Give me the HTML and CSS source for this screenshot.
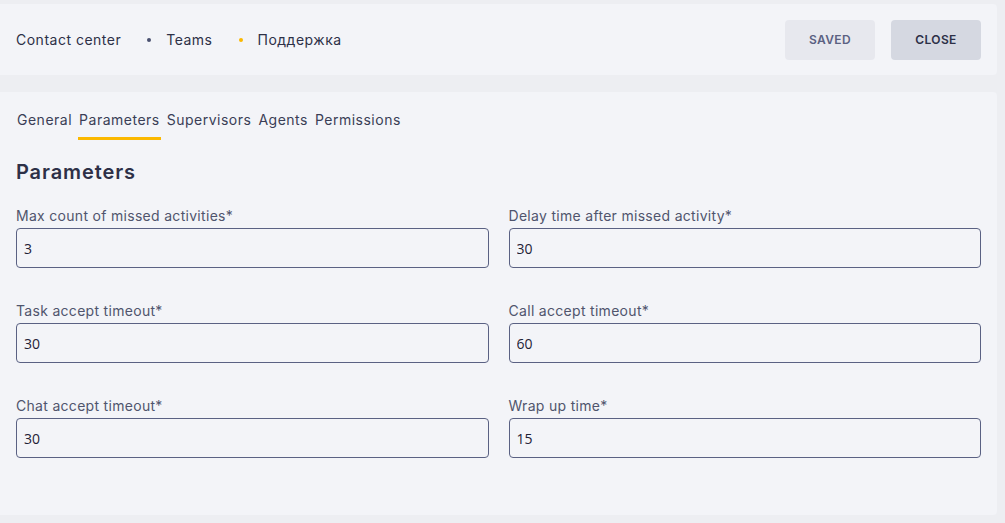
FILE: index.html
```html
<!DOCTYPE html>
<html>
<head>
	<title>Team parameters</title>
	<link rel="stylesheet" href="styles.css">
</head>
<body>

	<div id="boxHeader">
		<div id="boxCrumbs">
			<span class="lblCrumb">Contact center</span>
			<span class="dotCrumb"></span>
			<span class="lblCrumb">Teams</span>
			<span class="dotCrumb dotActive"></span>
			<span class="lblCrumb">Поддержка</span>
		</div>
		<div id="boxActions">
			<button class="btnAction btnSaved">SAVED</button>
			<button class="btnAction btnClose">CLOSE</button>
		</div>
	</div>

	<div id="boxContent">
		<div id="boxTabs">
			<span class="tab">General</span>
			<span class="tab tabActive">Parameters</span>
			<span class="tab">Supervisors</span>
			<span class="tab">Agents</span>
			<span class="tab">Permissions</span>
		</div>

		<h2 id="lblTitle">Parameters</h2>

		<div id="boxFields">
			<div class="field">
				<label class="lblField">Max count of missed activities*</label>
				<input class="inputField" type="text" value="3">
			</div>
			<div class="field">
				<label class="lblField">Delay time after missed activity*</label>
				<input class="inputField" type="text" value="30">
			</div>
			<div class="field">
				<label class="lblField">Task accept timeout*</label>
				<input class="inputField" type="text" value="30">
			</div>
			<div class="field">
				<label class="lblField">Call accept timeout*</label>
				<input class="inputField" type="text" value="60">
			</div>
			<div class="field">
				<label class="lblField">Chat accept timeout*</label>
				<input class="inputField" type="text" value="30">
			</div>
			<div class="field">
				<label class="lblField">Wrap up time*</label>
				<input class="inputField" type="text" value="15">
			</div>
		</div>
	</div>

</body>
</html>
```
FILE: styles.css
```css
*{
	margin: 0px;
	padding: 0px;
	box-sizing: border-box;
}

body{
	width: 100vw;
	height: 100vh;
	overflow: hidden;
	background-color: #edeef2;
	font-family: Inter, "Open Sans", sans-serif;
	letter-spacing: 0.5px;
	color: #2d3047;
	padding: 4px 8px 0px 0px;
}

#boxHeader{
	display: flex;
	align-items: center;
	justify-content: space-between;
	height: 71px;
	background-color: #f3f4f8;
	border-radius: 0px 4px 4px 0px;
	padding: 0px 16px;
}

#boxCrumbs{
	display: flex;
	align-items: center;
	font-size: 14px;
}
.dotCrumb{
	width: 4px;
	height: 4px;
	border-radius: 50%;
	background-color: #4a5070;
	margin: 0px 15px 0px 26px;
}
.dotActive{
	background-color: #fbb800;
}

#boxActions{
	display: flex;
	gap: 16px;
}
.btnAction{
	width: 90px;
	height: 40px;
	border: none;
	border-radius: 4px;
	font-family: inherit;
	font-size: 12px;
	font-weight: 600;
	letter-spacing: 0.4px;
}
.btnSaved{
	background-color: #e7e8ee;
	color: #5b6182;
}
.btnClose{
	background-color: #d5d8e1;
	color: #2d3047;
}

#boxContent{
	height: 423px;
	margin-top: 17px;
	background-color: #f3f4f8;
	border-radius: 0px 4px 4px 0px;
	padding: 14px 16px 0px 16px;
}

#boxTabs{
	display: flex;
	gap: 5px;
	font-size: 14px;
	color: #3a3e56;
}
.tab{
	padding: 5px 1px 9px 1px;
	border-bottom: 3px solid transparent;
}
.tabActive{
	border-bottom-color: #fbb800;
}

#lblTitle{
	font-size: 20px;
	font-weight: 600;
	letter-spacing: 0.9px;
	margin-top: 18px;
	line-height: 28px;
}

#boxFields{
	display: grid;
	grid-template-columns: 1fr 1fr;
	column-gap: 20px;
	row-gap: 32px;
	margin-top: 19px;
}
.field{
	display: flex;
	flex-direction: column;
}
.lblField{
	font-size: 14px;
	line-height: 20px;
	letter-spacing: 0.3px;
	color: #50556d;
	padding-top: 1px;
	margin-bottom: 2px;
}
.inputField{
	height: 40px;
	border: 1px solid #5a6183;
	border-radius: 4px;
	background-color: #f3f4f8;
	padding: 0px 7px;
	font-family: "Open Sans", sans-serif;
	letter-spacing: 0px;
	font-size: 14px;
	color: #1f2236;
}
```
